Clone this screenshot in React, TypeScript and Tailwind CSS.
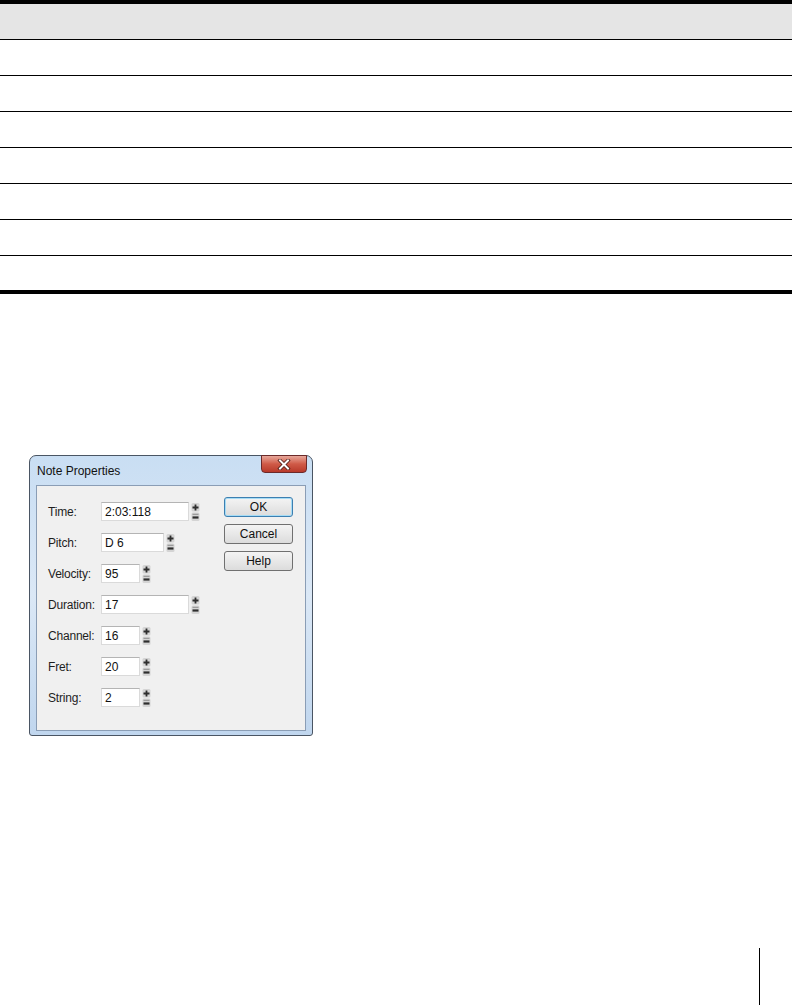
import React from "react";

function Spinner() {
  return (
    <svg width="9" height="20" viewBox="0 0 9 20" className="ml-[2px] shrink-0">
      <rect x="0.5" y="1" width="8" height="8.5" rx="1.5" fill="#d4d4d4" />
      <path d="M1.5 5.5h6M4.5 2.5v6" stroke="#2e2e2e" strokeWidth="1.8" />
      <rect x="0.5" y="10.5" width="8" height="8.5" rx="1.5" fill="#d4d4d4" />
      <path d="M1.5 15.5h6" stroke="#2e2e2e" strokeWidth="2.2" />
      <path d="M1.5 12.3h6" stroke="#8e8e8e" strokeWidth="1" />
    </svg>
  );
}

function Field({ label, value, w }: { label: string; value: string; w: string }) {
  return (
    <div className="flex items-center h-[19px]">
      <div className="w-[53px] text-[12px] text-[#1e1e1e] tracking-[-0.2px]">{label}</div>
      <div className={`${w} h-[19px] bg-white border border-[#dadada] border-t-[#b4b4b4] flex items-center pl-[3px] text-[12px] text-[#111]`}>
        {value}
      </div>
      <Spinner />
    </div>
  );
}

function Btn({ children, focus }: { children: React.ReactNode; focus?: boolean }) {
  return (
    <div
      className={`w-[69px] h-[20px] rounded-[3px] border flex items-center justify-center text-[12px] text-[#111] bg-gradient-to-b from-[#f4f4f4] to-[#dcdcdc] ${
        focus ? "border-[#3c7fb1] shadow-[inset_0_0_0_1px_#a6dcf5]" : "border-[#707070]"
      }`}
    >
      {children}
    </div>
  );
}

export default function App() {
  const rows = [0, 1, 2, 3, 4, 5, 6];
  return (
    <div className="w-[792px] h-[1005px] bg-white overflow-hidden flex flex-col" style={{ fontFamily: '"Liberation Sans", Arial, sans-serif' }}>
      <div className="w-full border-t-[4px] border-b-[4px] border-black">
        <div className="h-[35px] bg-[#e5e5e5]" />
        {rows.map((r) => (
          <div key={r} className={`border-t border-black ${r === 6 ? "h-[35px]" : "h-[36px]"}`} />
        ))}
      </div>

      <div className="ml-[29px] mt-[161px] w-[284px] h-[281px] rounded-t-[7px] rounded-b-[3px] border border-[#4a5563] bg-gradient-to-b from-[#c9def3] via-[#dbe8f6] to-[#c0d6ee] flex flex-col relative">
        <div className="h-[29px] flex items-center pl-[7px] text-[12px] text-[#111]">Note Properties</div>
        <div className="absolute right-[5px] top-[-1px] w-[46px] h-[18px] rounded-b-[4px] border border-[#6b2a2a] bg-gradient-to-b from-[#e7a79b] via-[#cf5a47] to-[#b8392a] flex items-center justify-center">
          <svg width="14" height="11" viewBox="0 0 14 11">
            <path d="M3 1.5l8 8M11 1.5l-8 8" stroke="#4a1a14" strokeWidth="3.6" strokeLinecap="square" />
            <path d="M3 1.5l8 8M11 1.5l-8 8" stroke="#ffffff" strokeWidth="2" strokeLinecap="square" />
          </svg>
        </div>
        <div className="mx-[6px] mb-[4px] flex-1 border border-[#8a9db5] bg-[#f0f0f0] flex pt-[16px] pl-[11px]">
          <div className="flex flex-col gap-[12px] w-[176px]">
            <Field label="Time:" value="2:03:118" w="w-[88px]" />
            <Field label="Pitch:" value="D 6" w="w-[63px]" />
            <Field label="Velocity:" value="95" w="w-[39px]" />
            <Field label="Duration:" value="17" w="w-[88px]" />
            <Field label="Channel:" value="16" w="w-[39px]" />
            <Field label="Fret:" value="20" w="w-[39px]" />
            <Field label="String:" value="2" w="w-[39px]" />
          </div>
          <div className="flex flex-col gap-[7px] -mt-[5px]">
            <Btn focus>OK</Btn>
            <Btn>Cancel</Btn>
            <Btn>Help</Btn>
          </div>
        </div>
      </div>

      <div className="flex-1 flex justify-end items-end pr-[32px]">
        <div className="w-[1px] h-[57px] bg-black" />
      </div>
    </div>
  );
}
